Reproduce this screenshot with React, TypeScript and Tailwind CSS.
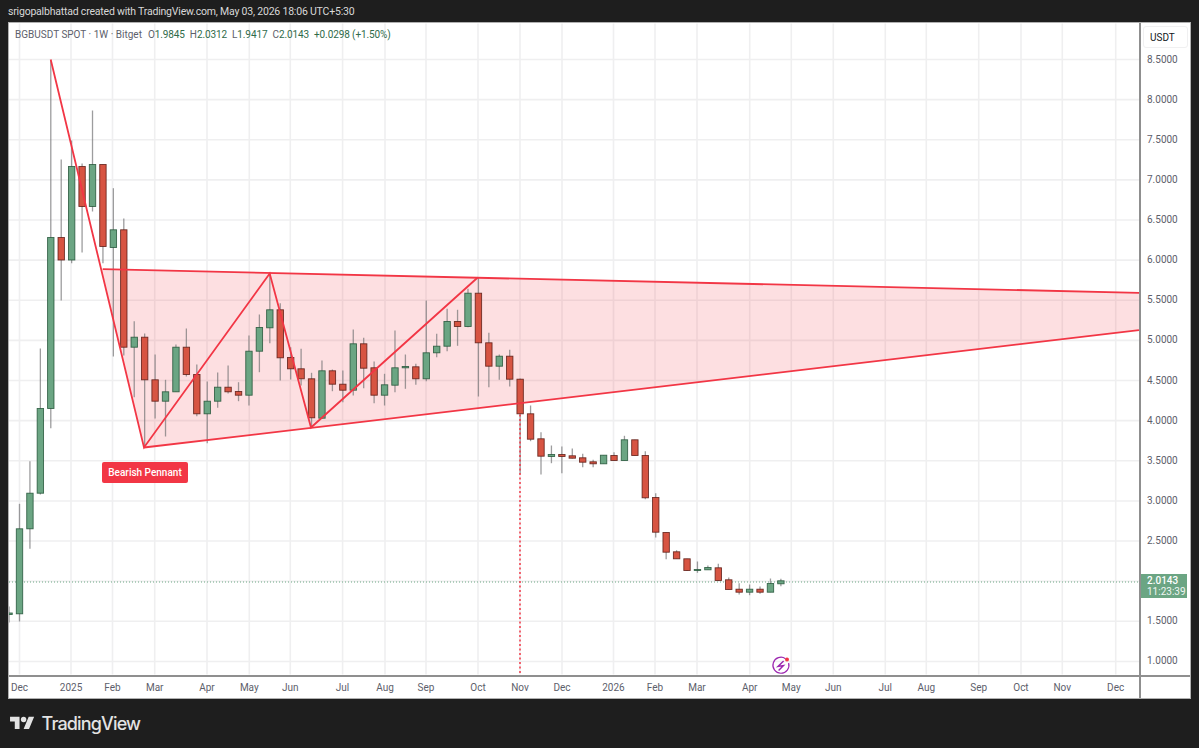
import React from "react"

const STEP = 10.43
const up = "u"
const dn = "d"
// bodyTop, bodyBottom, wickTop, wickBottom, direction
const candles: [number, number, number, number, string][] = [
  [612.5, 614, 606, 622, up],
  [528.3, 613.3, 503.3, 621, up],
  [492.7, 528.3, 460.7, 548.3, up],
  [408, 492.7, 348, 494, up],
  [237, 408, 60, 427.7, up],
  [237, 259.5, 159, 300, dn],
  [166, 259.5, 140, 262.7, up],
  [166, 206, 163, 252, dn],
  [164, 206, 110, 211, up],
  [164, 246, 164, 262.7, dn],
  [229.3, 247, 187.7, 356, up],
  [229.3, 346.7, 218, 355, dn],
  [336.7, 346.7, 320.7, 396.7, up],
  [336.7, 379.3, 333, 446.7, dn],
  [379.3, 400.7, 354, 418, dn],
  [391.3, 400.7, 379.3, 436, up],
  [346.7, 391.3, 344, 391.3, up],
  [346.7, 374, 328, 376, dn],
  [374, 413.3, 364, 415.7, dn],
  [400.7, 413.3, 381, 442.7, up],
  [386.7, 400.7, 372, 407.3, up],
  [386.7, 391.3, 365, 393, dn],
  [391, 394.7, 381.7, 400.7, dn],
  [350.7, 394.7, 335, 405, up],
  [327, 350.7, 314, 371.7, up],
  [309.3, 327.3, 273, 342.7, up],
  [309.3, 357.3, 302.7, 380, dn],
  [357, 368.3, 346.7, 379, dn],
  [368.3, 378.3, 348.3, 385, dn],
  [378.3, 417.3, 372.3, 426.7, dn],
  [370.3, 417.7, 360, 418, up],
  [370.3, 383.7, 369, 390.7, dn],
  [383.7, 389.7, 370, 401.7, dn],
  [343.3, 389.7, 329, 395, up],
  [343.3, 367.7, 337.3, 387.7, dn],
  [367.3, 394.7, 361, 402.7, dn],
  [384.3, 394.7, 373.3, 405, up],
  [367.3, 384.7, 330, 391.7, up],
  [366, 367.3, 354, 388.3, up],
  [366.3, 378.3, 363.3, 384.3, dn],
  [352.3, 378.3, 300, 380.7, up],
  [345.7, 352.3, 333.3, 356.7, up],
  [321, 345.7, 308.3, 350.7, up],
  [321, 326, 309.3, 345.3, dn],
  [292.7, 326, 288.3, 326.7, up],
  [292.7, 342.3, 277.3, 396, dn],
  [342.3, 365.7, 332.3, 386.7, dn],
  [355.7, 365.7, 354, 379.3, up],
  [355.7, 378.7, 349.3, 386, dn],
  [378.7, 413.3, 378, 473.3, dn],
  [413.3, 438.7, 405, 440.7, dn],
  [438.3, 455.7, 431.7, 474, dn],
  [454, 456, 445, 462.7, up],
  [454, 456, 446, 472.7, dn],
  [455.3, 457.7, 448, 458, dn],
  [457.3, 461.7, 453.3, 466.7, dn],
  [461.3, 463.3, 459.3, 466.7, dn],
  [454.7, 463.3, 454.7, 463.3, up],
  [455, 460, 451.7, 460, dn],
  [439.3, 460, 435.3, 460, up],
  [439.3, 455, 439.3, 455, dn],
  [455, 497.3, 450.7, 498.7, dn],
  [497, 531.7, 492.7, 537, dn],
  [532, 551.7, 532, 558.7, dn],
  [551.3, 558.3, 549.7, 558.3, dn],
  [558.3, 570, 558.3, 570.5, dn],
  [569, 570, 561, 572.3, up],
  [567, 569.3, 565, 569.3, up],
  [567.3, 580, 563.3, 580, dn],
  [579.3, 589, 577, 589, dn],
  [588.7, 591.7, 582.7, 594, dn],
  [588.7, 591.7, 584, 594.7, up],
  [588.7, 591.7, 586, 593.3, dn],
  [583, 591.7, 578, 591.7, up],
  [580.3, 583.3, 578.3, 585.7, up],
]

const gridX = [19.5, 71, 112.5, 154.7, 207, 249.3, 290.3, 342.6, 385, 426, 478, 520, 562, 613.5, 655, 697, 749.7, 791.3, 833.3, 885.3, 926.3, 978.7, 1021, 1062.3, 1115.7]
const timeLabels = ["Dec", "2025", "Feb", "Mar", "Apr", "May", "Jun", "Jul", "Aug", "Sep", "Oct", "Nov", "Dec", "2026", "Feb", "Mar", "Apr", "May", "Jun", "Jul", "Aug", "Sep", "Oct", "Nov", "Dec"]
const prices = ["8.5000", "8.0000", "7.5000", "7.0000", "6.5000", "6.0000", "5.5000", "5.0000", "4.5000", "4.0000", "3.5000", "3.0000", "2.5000", "2.0000", "1.5000", "1.0000"]

function Chart() {
  return (
    <svg viewBox="9 23 1130 651" className="block w-full h-full">
      {prices.map((_, i) => (
        <line key={i} x1="9" x2="1139" y1={59 + i * 40.13} y2={59 + i * 40.13} stroke="#efeff0" strokeWidth="1.6" />
      ))}
      {gridX.map((x) => (
        <line key={x} x1={x} x2={x} y1="23" y2="674" stroke="#efeff0" strokeWidth="1.6" />
      ))}
      <line x1="9" x2="1139" y1="581.5" y2="581.5" stroke="#6ba583" strokeWidth="1" strokeDasharray="1 2" />

      <polygon points="101.3,268.7 1139,292.3 1139,329.7 144,447" fill="#f23645" fillOpacity="0.16" />

      {candles.map(([top, bot, wt, wb, dir], i) => {
        const x = 9.07 + i * STEP
        const isUp = dir === up
        return (
          <g key={i}>
            <line x1={x} x2={x} y1={wt} y2={wb} stroke="#737375" strokeOpacity="0.7" strokeWidth="1.3" />
            <rect x={x - 3.2} y={top} width="6.4" height={bot - top} fill={isUp ? "#6ba583" : "#d75442"} stroke={isUp ? "#225437" : "#5b1a13"} strokeOpacity="0.85" strokeWidth="0.9" />
          </g>
        )
      })}

      <polyline points="50.7,59 144,447 269.7,273 311,427 477.7,277" fill="none" stroke="#f23645" strokeWidth="1.8" />
      <line x1="102.7" y1="268.7" x2="1139" y2="292.3" stroke="#f23645" strokeWidth="1.8" />
      <line x1="144" y1="447" x2="1139" y2="329.7" stroke="#f23645" strokeWidth="1.8" />
      <line x1="520" x2="520" y1="414" y2="674" stroke="#f23645" strokeWidth="1.5" strokeDasharray="2 2.5" />

      <g fill="none" stroke="#9c27b0">
        <path d="M785.5 658.2 A8 8 0 1 0 788.6 662.5" strokeWidth="1.2" />
        <path d="M783.6 660.5 L778 666 L783.5 665 L778.6 670" strokeWidth="1.4" />
      </g>
      <circle cx="787" cy="659" r="2" fill="#f23645" />
    </svg>
  )
}

export default function App() {
  return (
    <div className="w-[1199px] h-[748px] overflow-hidden bg-[#1e1e1e] font-['Roboto',sans-serif]">
      <div className="h-[22px] pl-2 text-[10.5px] leading-[24px] tracking-[-0.2px] text-[#d8d8d8] whitespace-nowrap">
        srigopalbhattad created with TradingView.com, May 03, 2026 18:06 UTC+5:30
      </div>

      <div className="ml-2 w-[1183px] h-[677px] bg-white border border-[#b0b0b0] flex flex-col">
        <div className="flex h-[652px]">
          <div className="relative w-[1130px]">
            <Chart />
            <div className="absolute left-[6px] top-[5px] flex gap-[6px] text-[10px] leading-[14px] text-[#5d606b] whitespace-nowrap">
              <span>BGBUSDT SPOT · 1W · Bitget</span>
              <div className="flex gap-[5px] tracking-[-0.1px]">
                <span>O<span className="text-[#2f6b4a]">1.9845</span></span>
                <span>H<span className="text-[#2f6b4a]">2.0312</span></span>
                <span>L<span className="text-[#2f6b4a]">1.9417</span></span>
                <span>C<span className="text-[#2f6b4a]">2.0143</span></span>
                <span className="text-[#2f6b4a]">+0.0298 (+1.50%)</span>
              </div>
            </div>
            <div className="absolute left-[93px] top-[439px] w-[86px] h-[21px] rounded-[2px] bg-[#f23645] flex items-center justify-center text-[10px] font-medium text-white whitespace-nowrap">
              Bearish Pennant
            </div>
          </div>

          <div className="relative flex-1 border-l-2 border-[#8f8f8f] pt-[16px]">
            <div className="absolute left-[2px] top-[3px] w-[45px] h-[22px] rounded-[3px] border border-[#f0f0f1] bg-white flex items-center pl-[6px] text-[10px] text-[#131722]">
              USDT
            </div>
            {prices.map((p) => (
              <div key={p} className="h-[40.13px] flex items-center pl-[6px] text-[10px] text-[#5d606b]">
                {p}
              </div>
            ))}
            <div className="absolute left-0 top-[551px] w-[46px] h-[24px] bg-[#6ba583] pl-[6px] text-[10px] leading-[11px] pt-[1px] text-white">
              <div className="font-medium">2.0143</div>
              <div className="opacity-90">11:23:39</div>
            </div>
          </div>
        </div>

        <div className="flex flex-1 border-t-2 border-[#8f8f8f]">
          <div className="flex w-[1130px] items-center pb-[1px] text-[10px] text-[#5d606b]">
            {gridX.map((x, i) => (
              <div key={i} className="w-0 flex justify-center" style={{ marginLeft: i === 0 ? x - 9 : x - gridX[i - 1] }}>
                <span>{timeLabels[i]}</span>
              </div>
            ))}
          </div>
          <div className="flex-1 border-l-2 border-[#8f8f8f]" />
        </div>
      </div>

      <div className="flex items-center h-[49px] pl-[10px] gap-[7px] text-[#e3e3e3]">
        <svg width="24.5" height="19" viewBox="0 0 36 28" fill="currentColor">
          <path d="M14 22H7V11H0V4h14v18zM28 22h-8l7.5-18h8L28 22z" />
          <circle cx="20" cy="8" r="4" />
        </svg>
        <span className="text-[18px] font-medium font-['Inter',sans-serif] tracking-[-0.85px]">TradingView</span>
      </div>
    </div>
  )
}
